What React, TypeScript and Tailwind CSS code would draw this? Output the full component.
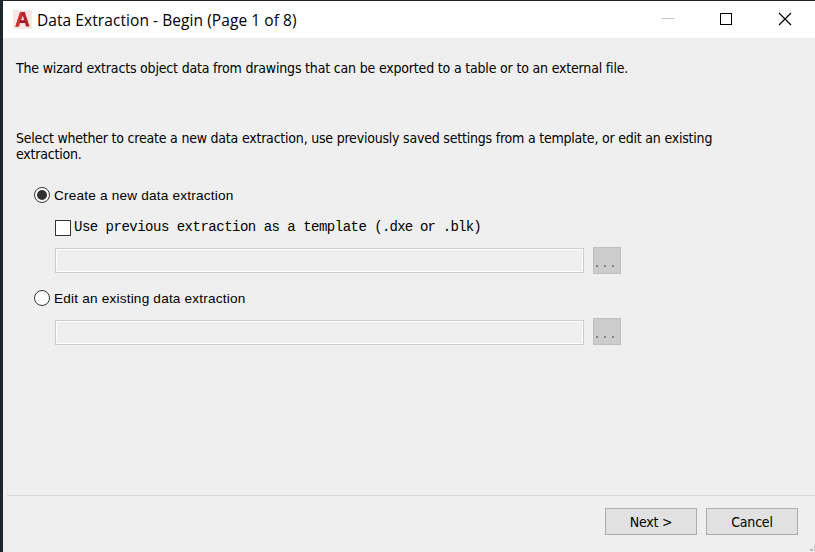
import type { ReactNode } from 'react';

const tahoma = "font-['DejaVu_Sans_Condensed','DejaVu_Sans',sans-serif] [font-stretch:condensed]";

function AppLogo() {
  return (
    <svg className="h-[19px] w-[19px]" viewBox="0 0 19 19" aria-hidden="true">
      <rect width="19" height="19" fill="#f8e8e3" />
      <path d="M2.4 16.5 7.2 2h4.6l4.8 14.5h-3.6l-1-3.4H7l-1.1 3.4Z" fill="#b3202b" />
      <path d="M8 10.6h3.3L9.7 5.4Z" fill="#f8e8e3" />
      <path d="M2.4 16.5 7.2 2h2.3L5.9 16.5Z" fill="#cf3338" />
      <path d="M7 13.1 8 10.6h3.3l.7 2.5Z" fill="#8e1820" />
    </svg>
  );
}

function TitleBar() {
  return (
    <header className="flex h-[37px] shrink-0 items-center bg-white pl-[10px]">
      <AppLogo />
      <h1 className="ml-[5px] flex-1 whitespace-nowrap font-['Open_Sans','Noto_Sans',sans-serif] text-[15.5px] leading-5 tracking-[0.07px]">
        Data Extraction - Begin (Page 1 of 8)
      </h1>
      <svg className="h-[37px] w-[156px]" viewBox="0 0 156 37" fill="none" shapeRendering="crispEdges">
        <path d="M3 17.5h12" stroke="#c4c4c4" />
        <rect x="61.5" y="12.5" width="11" height="11" stroke="#000" />
        <path d="m120 12 12 12m0-12-12 12" stroke="#000" strokeWidth="1.2" shapeRendering="auto" />
      </svg>
    </header>
  );
}

function Radio({ checked = false, children }: { checked?: boolean; children: ReactNode }) {
  return (
    <label className="flex h-4 items-center">
      <span className="flex h-4 w-4 items-center justify-center rounded-full border border-[#333] bg-white">
        {checked && <span className="h-[10px] w-[10px] rounded-full bg-[#333]" />}
      </span>
      <span className="ml-1 mt-px whitespace-nowrap font-['Liberation_Sans',sans-serif] text-[13.6px] leading-4 tracking-[0.2px]">
        {children}
      </span>
    </label>
  );
}

function FileRow({ low = false }: { low?: boolean }) {
  return (
    <div className={low ? 'flex h-[27px] items-end' : 'flex h-[27px] items-center'}>
      <div className="h-[25px] w-[529px] border border-[#cccccc] bg-[#efefef] shadow-[inset_0_0_0_1px_#fff]" />
      <button className="ml-[9px] flex h-[27px] w-7 items-end gap-[6px] border border-[#bfbfbf] bg-[#cccccc] pb-[6px] pl-[2px]" aria-label="Browse">
        <i className="h-[2px] w-[2px] bg-[#838383]" />
        <i className="h-[2px] w-[2px] bg-[#838383]" />
        <i className="h-[2px] w-[2px] bg-[#838383]" />
      </button>
    </div>
  );
}

function PushButton({ children }: { children: ReactNode }) {
  return (
    <button className={`${tahoma} h-[27px] w-[92px] border border-[#adadad] bg-[#e1e1e1] pt-px text-[14px] leading-[24px] tracking-[-0.2px]`}>
      {children}
    </button>
  );
}

export default function App() {
  return (
    <div className="h-[552px] w-[815px] overflow-hidden bg-[#20242b] pl-[3px] pt-px text-black">
      <div className="relative flex h-full flex-col bg-[#efefef]">
        <TitleBar />
        <main className="h-[457px] shrink-0">
          <p className={`${tahoma} ml-[13px] mt-[22px] whitespace-nowrap text-[14px] leading-4 tracking-[-0.18px]`}>
            The wizard extracts object data from drawings that can be exported to a table or to an external file.
          </p>
          <p className={`${tahoma} ml-[13px] mt-[54px] whitespace-nowrap text-[14px] leading-4 tracking-[-0.21px]`}>
            Select whether to create a new data extraction, use previously saved settings from a template, or edit an existing
            <br />
            extraction.
          </p>
          <div className="ml-[31px] mt-[25px]">
            <Radio checked>Create a new data extraction</Radio>
            <div className="ml-[21px]">
              <label className="mt-[17px] flex h-4 items-center">
                <span className="h-4 w-4 border border-[#333] bg-white" />
                <span className="-mt-[2px] ml-[3px] whitespace-pre font-['Liberation_Mono',monospace] text-[14px] leading-4 tracking-[-0.5px]">
                  Use previous extraction as a template{' '}
                  <span className="tracking-[-0.78px]">(.dxe or .blk)</span>
                </span>
              </label>
              <div className="mt-[11px]">
                <FileRow />
              </div>
            </div>
            <div className="mt-4">
              <Radio>Edit an existing data extraction</Radio>
            </div>
            <div className="ml-[21px] mt-3">
              <FileRow low />
            </div>
          </div>
        </main>
        <footer className="ml-1 flex flex-1 justify-end gap-[9px] border-t border-[#d9d9d9] pr-[17px] pt-3">
          <PushButton>Next &gt;</PushButton>
          <PushButton>Cancel</PushButton>
        </footer>
        <svg className="absolute bottom-0 right-0 h-2 w-[5px]" viewBox="0 0 5 8" fill="#bcbcbc">
          <path d="M4 1h1v3H4zM0 5h3v2H0zM4 5h1v2H4z" />
        </svg>
      </div>
    </div>
  );
}
